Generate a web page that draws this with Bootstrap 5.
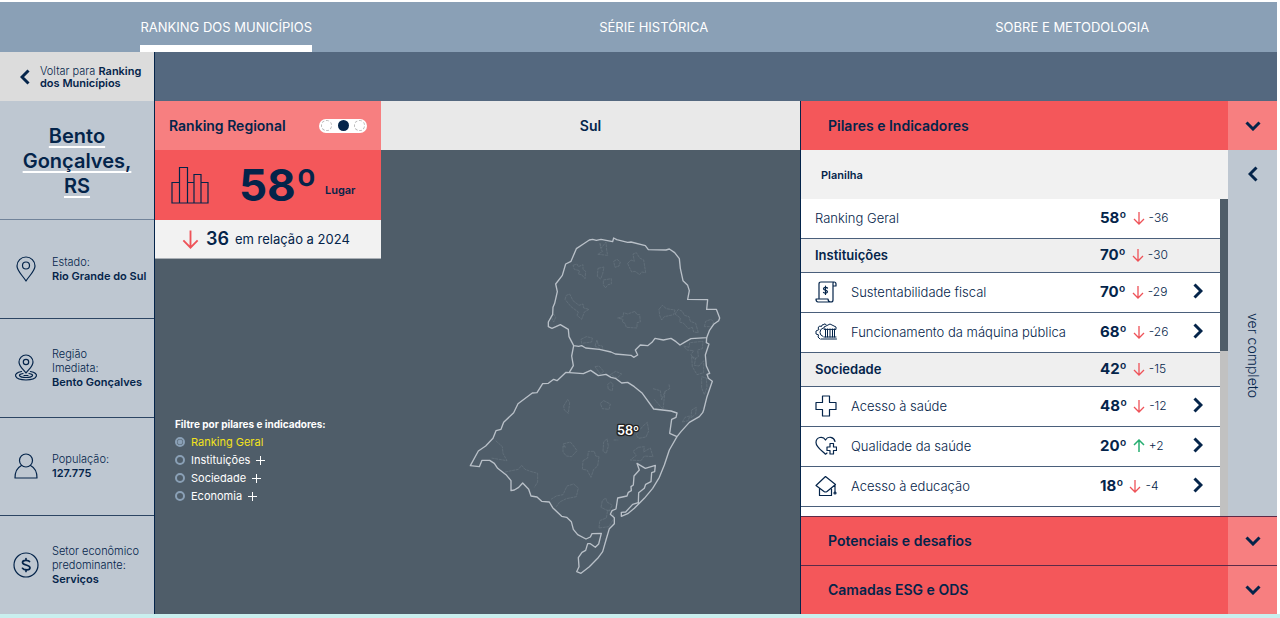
<!DOCTYPE html>
<html lang="pt-BR">
<head>
<meta charset="utf-8">
<meta name="viewport" content="width=device-width, initial-scale=1">
<title>Ranking dos Municípios</title>
<link href="https://cdn.jsdelivr.net/npm/bootstrap@5.3.0/dist/css/bootstrap.min.css" rel="stylesheet">
<style>
:root{--navy:#04244a;--red:#f4575a;--pink:#f77f80;--steel:#8aa0b6;--mist:#bec7d1;--slate:#4f5d69;--band:#54687f}
body{font-family:Inter,"Open Sans",sans-serif;font-size:13px;line-height:16px;color:var(--navy);background:#fff;min-height:100vh;border-bottom:4px solid #c9efee;padding:2px 3px 0 0}
button{font:inherit;color:inherit;background:none;border:0;padding:0}
svg{display:block;flex:none}
.line-icon{fill:none;stroke:var(--navy);stroke-width:1.2;stroke-linejoin:round;stroke-linecap:round}
.chev{fill:none;stroke:var(--navy);stroke-width:3}
.top-tabs{background:var(--steel);height:50px;padding:0 10% 0 11%}
.top-tabs a{color:#fff;text-decoration:none;line-height:50px}
.top-tabs a.current{box-shadow:inset 0 -7px #fff}
.side{width:155px;background:var(--mist);border-right:1px solid var(--navy);font-size:11px;line-height:14px}
.back-link{height:49px;background:#dcdcdc;color:var(--navy);text-decoration:none;padding-left:20px;gap:10px;line-height:12px}
.city{height:119px;border-bottom:1px solid #71839a;padding:2px 20px 0}
.city h1{font-size:20px;line-height:25px;font-weight:600;margin:0;text-decoration:underline #fff 2px;text-underline-offset:3px;text-decoration-skip-ink:none}
.fact{flex:1;gap:13px;padding-left:13px;border-bottom:1px solid #2c4563}
.fact:last-child{border-bottom:0}
.fact strong{display:block}
strong{font-weight:600}
.thin{font-weight:300}
.band{height:49px;background:var(--band)}
.stage{background:var(--slate)}
.rank-col{width:226px}
.rank-head{height:49px;background:var(--pink);padding:0 14px}
.scope{width:48px;height:14px;border-radius:7px;background:#fff;padding:0 2px}
.scope input{appearance:none;width:11px;height:11px;border:1px dashed #bbb;border-radius:50%;margin:0}
.scope input:checked{background:var(--navy);border:0}
.rank-main{height:70px;background:var(--red);padding-left:16px}
.bars{stroke-linejoin:miter}
.big{font-size:44px;line-height:70px;font-weight:700;margin-left:30px}
.lugar{font-size:11px;font-weight:600;margin:10px 0 0 8px}
.rank-delta{height:39px;background:#f2f2f2;border-bottom:1px solid #a9afb5;gap:6px;padding-left:26px}
.rank-delta b{font-size:18px;font-weight:600}
.filters{color:#fff;margin:156px 0 0 20px;font-size:11px}
.filters legend{font-size:10px;line-height:18px;font-weight:700;margin:0}
.filters div{height:18px}
.filters input{appearance:none;width:10px;height:10px;border:2px solid var(--steel);border-radius:50%;margin:0 6px 0 0}
.filters input:checked{background:radial-gradient(var(--steel) 2px,transparent 3px)}
.filters input:checked+label{color:#f3e21b}
.filters button{margin-left:6px;width:9px;height:9px;background:linear-gradient(#fff,#fff) center/9px 1px no-repeat,linear-gradient(#fff,#fff) center/1px 9px no-repeat}
.map-head{height:49px;background:#e9e9e9}
.map-body{padding-top:82px}
.panel{width:477px;border-left:1px solid var(--navy)}
.acc{height:49px;background:var(--red);width:100%}
.acc span:first-child{flex:1;text-align:left;padding-left:27px}
.acc .tog{width:49px;height:100%;background:var(--pink)}
.acc.ruled{border-top:1px solid #5c2b48}
.title-text{font-size:14px;font-weight:600}
.sheet-head{height:49px;background:#f1f1f1;padding-left:20px;font-size:11px;font-weight:600}
.scores{width:100%;font-size:13px}
.scores td,.scores th{padding:0;font-weight:300;border-bottom:1px solid #4a5f7b}
.scores tr{height:40px}
.scores .overall{height:39px}
.scores .pillar{height:34px;background:#efefef}
.scores .pillar th{font-weight:600}
.scores th{padding-left:14px}
.scores th .cell{display:flex;align-items:center;gap:14px}
.scores .num{width:93px}
.scores .go{width:27px}
.num .cell{display:flex;align-items:center;gap:6px;font-size:12px}
.num b{font-size:15px;font-weight:700}
.num .cell svg{margin-right:-2px}
.track{width:8px;background:#c1c1c1}
.thumb{height:152px;background:var(--slate)}
.more{width:49px;background:var(--mist)}
.more svg{margin-top:16px}
.more span{writing-mode:vertical-rl;font-size:14px;font-weight:300;padding-top:14px}
</style>
</head>
<body class="d-flex flex-column">
<svg width="0" height="0" class="position-absolute">
<symbol id="down" viewBox="0 0 12 14"><path d="M6 1v12M1 8l5 5 5-5" fill="none" stroke="#ee5258" stroke-width="1.3"/></symbol>
<symbol id="up" viewBox="0 0 12 14"><path d="M6 13V1M1 6l5-5 5 5" fill="none" stroke="#27ae71" stroke-width="1.5"/></symbol>
<symbol id="right" viewBox="0 0 10 16"><path d="M1.500 1.500l6.500 6.500-6.500 6.500"/></symbol>
<symbol id="left" viewBox="0 0 10 16"><path d="M8.500 1.500L2 8l6.500 6.500"/></symbol>
<symbol id="chevdown" viewBox="0 0 16 10"><path d="M1.500 1.500L8 8l6.500-6.500"/></symbol>
</svg>
<nav class="top-tabs d-flex justify-content-between">
  <a class="current" href="#">RANKING DOS MUNICÍPIOS</a>
  <a href="#">SÉRIE HISTÓRICA</a>
  <a href="#">SOBRE E METODOLOGIA</a>
</nav>
<div class="d-flex flex-fill">
  <aside class="side d-flex flex-column flex-shrink-0">
    <a href="#" class="back-link d-flex align-items-center"><svg class="chev" width="10" height="16"><use href="#left"/></svg><span><span class="thin">Voltar para</span> <strong>Ranking<br>dos Municípios</strong></span></a>
    <div class="city d-flex align-items-center justify-content-center text-center"><h1>Bento Gonçalves, RS</h1></div>
    <div class="fact d-flex align-items-center">
      <svg class="line-icon" width="26" height="28" viewBox="0 0 26 28"><path d="M13 26C10 21 4 16 4 11a9 9 0 0 1 18 0c0 5-6 10-9 15z"/><circle cx="13" cy="10.500" r="3.500"/></svg>
      <div><span class="thin">Estado:</span><strong class="text-nowrap">Rio Grande do Sul</strong></div>
    </div>
    <div class="fact d-flex align-items-center">
      <svg class="line-icon" width="26" height="28" viewBox="0 0 26 28"><path d="M13 19c-2-3.500-7-6-7-11a7 7 0 0 1 14 0c0 5-5 7.500-7 11z"/><circle cx="13" cy="8" r="2.700"/><path d="M8.500 17.500C-1 19 1 26 13 26s14-7 4.500-8.500M10 19.500c-6 1-4 4 3 4s9-3 3-4M11 21.500h4"/></svg>
      <div><span class="thin">Região<br>Imediata:</span><strong class="text-nowrap">Bento Gonçalves</strong></div>
    </div>
    <div class="fact d-flex align-items-center">
      <svg class="line-icon" width="26" height="28" viewBox="0 0 26 28"><circle cx="13" cy="8.500" r="6.500"/><path d="M8.500 13.500C4.500 15.500 2 19 2 26h22c0-7-2.500-10.500-6.500-12.500"/></svg>
      <div><span class="thin">População:</span><strong>127.775</strong></div>
    </div>
    <div class="fact d-flex align-items-center">
      <svg class="line-icon" width="26" height="28" viewBox="0 0 26 28"><circle cx="13" cy="14" r="12"/><path d="M16.500 10.500c-1-1.500-7-2-7 1 0 3 7.500 2 7.500 5.200 0 3-6 2.600-7.500.6M13 7.500v2M13 18.500v2" stroke-width="1.700"/></svg>
      <div><span class="thin">Setor econômico<br>predominante:</span><strong>Serviços</strong></div>
    </div>
  </aside>
  <div class="flex-fill d-flex flex-column">
    <div class="band"></div>
    <div class="d-flex flex-fill">
      <main class="stage d-flex flex-fill">
        <section class="rank-col flex-shrink-0">
          <div class="rank-head d-flex align-items-center justify-content-between">
            <span class="title-text">Ranking Regional</span>
            <div class="scope d-flex align-items-center justify-content-between" role="radiogroup" aria-label="Abrangência do ranking">
              <input type="radio" name="scope" aria-label="Nacional"><input type="radio" name="scope" aria-label="Regional" checked><input type="radio" name="scope" aria-label="Estadual">
            </div>
          </div>
          <div class="rank-main d-flex align-items-center">
            <svg class="line-icon bars" width="38" height="38" viewBox="0 0 38 38"><path d="M1 16.500h7.500V37H1zM8.500 1.500h8V37h-8zM16.500 16.500H23V37h-6.500zM23 8.500h7V37h-7zM30 16.500h7V37h-7z"/></svg>
            <span class="big">58º</span><span class="lugar">Lugar</span>
          </div>
          <div class="rank-delta d-flex align-items-center"><svg width="19" height="20"><use href="#down"/></svg><b>36</b><span>em relação a 2024</span></div>
          <fieldset class="filters">
            <legend>Filtre por pilares e indicadores:</legend>
            <div class="d-flex align-items-center"><input type="radio" name="f" id="f1" checked><label for="f1">Ranking Geral</label></div>
            <div class="d-flex align-items-center"><input type="radio" name="f" id="f2"><label for="f2">Instituições</label><button aria-label="Expandir Instituições"></button></div>
            <div class="d-flex align-items-center"><input type="radio" name="f" id="f3"><label for="f3">Sociedade</label><button aria-label="Expandir Sociedade"></button></div>
            <div class="d-flex align-items-center"><input type="radio" name="f" id="f4"><label for="f4">Economia</label><button aria-label="Expandir Economia"></button></div>
          </fieldset>
        </section>
        <section class="flex-fill">
          <div class="map-head d-flex align-items-center justify-content-center title-text">Sul</div>
          <div class="map-body d-flex justify-content-center">
            <svg width="260" height="346" viewBox="30 36 780 1038" fill="none" stroke-linejoin="round">
              <g stroke="#687581" stroke-width="2">
                <path d="M447 70l4 14 14-18 2 24 3 16-30-3 14-8-6-14zM366 136l12-4 4 8 14-6v14l8 6-2 22-10-12-10-2 4-10-16-4zM441 145l18-4-4 20-6 16-10-8zM488 124l10-6 10 8-4 12-12 4zM530 130l10-10 10 4-4-22 10-4 10 16 12 6 6 38-12-2-6 8-14-10-10 2-6-12zM457 180l24-4v16l-10 2-8 10-6-10zM342 238l4-12 10-4 10 20 18 14 12-4 2 12 16 4-14 8-8 22-14-12 4-10-22-16zM500 294l16-4 2-12 12 4 22-8 6 10h8l2 22-10 2v16l-32-2-4-12-8-4 2-8zM624 268l10-12 12 10 26 4-4 14-28 6-8 10-6-14zM672 282l10-14 12 6 6 12 14 4 4 14 16 6 8 28-14-2-4-14-12 4-14-16-12-4 2-12zM300 290l8-8 6 10-6 14zM760 320l4-16 16-6 8 8-6 14zM390 358l16-8 18 4-2 12-30 4zM432 378l6-18 4 16 12 2v12zM698 378l16 4 2-14 40-4-2 22-14 4 2 20-12 8-10-14 8-12-20-2zM722 410l12 4-4 22 14 2 14-16v36l-20 6-14-24zM752 470l14 4 2 28-8 22-8-20zM432 440l12-2 14 16-10 8zM478 464l16-10 18 8-14 12zM470 494l8-8 8 6-2 20-12-4zM606 506l22 6 4 28 10-26 14-8-2-14M642 514l-6 54-26-30M338 558l12-20 6 10-4 32-12-10zM448 550l10-8 20 10-4 16-20-2zM694 606l8-14 14-4-4 14zM720 594l2-24 14-8-2 20zM336 678l8 4-8-10 22-6 10 12 10 14-16 18-16-2-10-12zM396 722l14-8 2-20h18l4 14 10 2-4 28-12 10-8 24-12-22-14-2zM456 694l2-28 10-10 4 22-6 22zM555 645l20-26 14-12 4 26-8 18-22 4zM562 682l18-2-2 16 20-12 8 26-26-2-10 14-32-2 18-14-10-12zM134 662l20 18 2 20 12 22-48-8M162 756l40-8 10-12 10 12 16 6 22 6v26l-10 16M300 838l16-10 20-4 12-26 20-6 14 12-6 26-30 6-20 10-10 14M450 862l4-20 10-8 4 12 16 10-10 18zM444 924l2-22 20-8 4-24 16 6 2 20-14 24zM488 660h14" stroke-dasharray="9 2"/>
              </g>
              <g stroke="#b9c0c8" stroke-width="4">
                <path d="M292 306L305 283 306 262 311 250 319 215 314 192 334 166 344 132 360 124 376 86 397 72 415 60 425 58 436 61 450 58 485 65 488 54 497 59 530 67 540 66 583 77 592 89 645 90 655 87 671 98 685 116 688 145 696 182 710 196 715 212 710 238 770 239 767 268 796 268 806 294 803 302 788 313 775 332 767 353 720 356 700 367 687 375 675 365 660 355 637 360 612 355 603 367 590 377 568 375 553 390 560 405 548 412 540 406 493 402 480 396 445 388 404 384 392 377 383 379 368 377 354 350 352 328 328 314 303 325 292 320z"/>
                <path d="M368 377L362 408 367 437 355 457"/>
                <path d="M767 353L766 368 774 372 763 405 766 438 776 460 768 463 772 475 784 484 768 530 758 570 755 578 745 590 715 607 690 635 678 650 655 690 640 735 625 772 605 805 580 835 550 865 530 881 511 889 511 877 524 876 545 853 562 848 563 818 580 805 584 793 600 785 602 758 611 755 613 736 583 745 558 730 565 750 549 768 547 795 540 800 541 812 532 817 528 828 500 834 495 867 483 872 478 883 490 893 490 911 475 926 465 960 455 995 440 1015 415 1040 390 1060 377 1055 384 1040 382 1013 393 997 404 991 410 971 418 971 433 982 443 972 451 940 423 941 418 951 405 957 380 944 367 928 361 905 347 892 332 889 305 863 295 846 272 844 258 831 240 828 233 808 215 789 203 802 190 810 180 812 180 782 165 764 140 745 130 730 116 721 93 721 85 740 58 737 82 693 104 678 126 655 135 632 150 628 158 607 188 578 201 551 244 519 258 518 275 491 292 490 308 478 318 482 345 457 397 461 419 451 442 467 465 463 480 472 493 475 512 489 530 487 550 500 574 520 608 567 660 573 678 579 675 592 662 598 656 640 678 650"/>
              </g>
              <text x="531" y="645" text-anchor="middle" font-size="38" font-weight="600" fill="#fff" stroke="#222" stroke-width="8" paint-order="stroke">58º</text>
            </svg>
          </div>
        </section>
      </main>
      <section class="panel flex-shrink-0 d-flex flex-column">
        <button class="acc d-flex align-items-center title-text"><span>Pilares e Indicadores</span><span class="tog d-flex align-items-center justify-content-center"><svg class="chev" width="16" height="10"><use href="#chevdown"/></svg></span></button>
        <div class="d-flex flex-fill">
          <div class="flex-fill d-flex flex-column">
            <div class="sheet-head d-flex align-items-center">Planilha</div>
            <div class="d-flex flex-fill">
              <div class="flex-fill">
                <table class="scores"><tbody>
                  <tr class="overall"><th scope="row">Ranking Geral</th><td class="num"><div class="cell"><b>58º</b><svg width="12" height="14"><use href="#down"/></svg><span>-36</span></div></td><td class="go"></td></tr>
                  <tr class="pillar"><th scope="row">Instituições</th><td class="num"><div class="cell"><b>70º</b><svg width="12" height="14"><use href="#down"/></svg><span>-30</span></div></td><td class="go"></td></tr>
                  <tr><th scope="row"><div class="cell"><svg class="line-icon" width="22" height="22" viewBox="0 0 22 22"><path d="M4 17V3q0-2 2-2h13q2 0 2 2v2h-3V3q0-2 1-2M18 5v14q0 2-2 2H3q-2 0-2-3h12q0 3 3 3"/><path d="M12.500 7c-1-1-4-1-4 .8 0 1.800 4 1 4 3 0 1.700-3 1.700-4 .6M10.500 5v8.500"/></svg>Sustentabilidade fiscal</div></th><td class="num"><div class="cell"><b>70º</b><svg width="12" height="14"><use href="#down"/></svg><span>-29</span></div></td><td class="go"><button aria-label="Abrir Sustentabilidade fiscal"><svg class="chev" width="10" height="16"><use href="#right"/></svg></button></td></tr>
                  <tr><th scope="row"><div class="cell"><svg class="line-icon" width="22" height="22" viewBox="0 0 22 22"><path stroke-width="1" d="M9 8V6l6-3 6 3v2zM9 16h12M6 18h15.500M10.500 8v8M12.500 8v8M15 8v8M17.500 8v8M19.500 8v8M8 7a4.500 4.500 0 0 0 0 8.500M9 3.500L7 4 6.500 5.500 4.500 5 3 7l1 1.500L1 10v3l2.500.8L3 16l2 2M11 3.500L9.500 3"/></svg>Funcionamento da máquina pública</div></th><td class="num"><div class="cell"><b>68º</b><svg width="12" height="14"><use href="#down"/></svg><span>-26</span></div></td><td class="go"><button aria-label="Abrir Funcionamento da máquina pública"><svg class="chev" width="10" height="16"><use href="#right"/></svg></button></td></tr>
                  <tr class="pillar"><th scope="row">Sociedade</th><td class="num"><div class="cell"><b>42º</b><svg width="12" height="14"><use href="#down"/></svg><span>-15</span></div></td><td class="go"></td></tr>
                  <tr><th scope="row"><div class="cell"><svg class="line-icon" width="22" height="22" viewBox="0 0 22 22"><path d="M7.500 1h7v6.500H21v7h-6.500V21h-7v-6.500H1v-7h6.500z"/></svg>Acesso à saúde</div></th><td class="num"><div class="cell"><b>48º</b><svg width="12" height="14"><use href="#down"/></svg><span>-12</span></div></td><td class="go"><button aria-label="Abrir Acesso à saúde"><svg class="chev" width="10" height="16"><use href="#right"/></svg></button></td></tr>
                  <tr><th scope="row"><div class="cell"><svg class="line-icon" width="22" height="22" viewBox="0 0 22 22"><path d="M12 18l-1.500 1.200C6 15 1 12 1 7.500 1 2 8 .5 10.500 5 13 .5 19 2 20 6.500M15 8.500h3.500V12h3v3.500h-3V19H15v-3.500h-3V12h3z"/></svg>Qualidade da saúde</div></th><td class="num"><div class="cell"><b>20º</b><svg width="12" height="14"><use href="#up"/></svg><span>+2</span></div></td><td class="go"><button aria-label="Abrir Qualidade da saúde"><svg class="chev" width="10" height="16"><use href="#right"/></svg></button></td></tr>
                  <tr><th scope="row"><div class="cell"><svg class="line-icon" width="22" height="22" viewBox="0 0 22 22"><path d="M10.500 1.500l10 8-8.500 7q-1.500 1-3 0L1 10.500zM4.500 14v6.500h12V14M20 10v7"/><circle cx="20" cy="18" r="1"/></svg>Acesso à educação</div></th><td class="num"><div class="cell"><b>18º</b><svg width="12" height="14"><use href="#down"/></svg><span>-4</span></div></td><td class="go"><button aria-label="Abrir Acesso à educação"><svg class="chev" width="10" height="16"><use href="#right"/></svg></button></td></tr>
                </tbody></table>
              </div>
              <div class="track"><div class="thumb"></div></div>
            </div>
          </div>
          <button class="more d-flex flex-column align-items-center"><svg class="chev" width="10" height="16"><use href="#left"/></svg><span class="my-auto">ver completo</span></button>
        </div>
        <button class="acc ruled d-flex align-items-center title-text"><span>Potenciais e desafios</span><span class="tog d-flex align-items-center justify-content-center"><svg class="chev" width="16" height="10"><use href="#chevdown"/></svg></span></button>
        <button class="acc ruled d-flex align-items-center title-text"><span>Camadas ESG e ODS</span><span class="tog d-flex align-items-center justify-content-center"><svg class="chev" width="16" height="10"><use href="#chevdown"/></svg></span></button>
      </section>
    </div>
  </div>
</div>
<script src="https://cdn.jsdelivr.net/npm/bootstrap@5.3.0/dist/js/bootstrap.bundle.min.js"></script>
</body>
</html>
